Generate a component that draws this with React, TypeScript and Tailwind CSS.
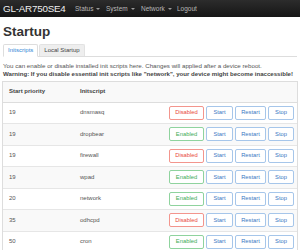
import React from "react";

const rows: [string, string, boolean][] = [
  ["19", "dnsmasq", false],
  ["19", "dropbear", true],
  ["19", "firewall", false],
  ["19", "wpad", true],
  ["20", "network", true],
  ["35", "odhcpd", false],
  ["50", "cron", true],
];

function Caret() {
  return <span className="ml-[3px] inline-block align-middle border-x-[2px] border-t-[2px] border-x-transparent border-t-[#999]" />;
}

export default function App() {
  return (
    <div className="w-[300px] h-[250px] overflow-hidden bg-white relative" style={{ fontFamily: '"Liberation Sans", Arial, sans-serif' }}>
      <div className="h-[17px] bg-gradient-to-b from-[#2c2c2c] to-[#161616] flex items-center">
        <div className="pl-[3px] text-[9.8px] leading-none text-[#eeeeee] w-[75px] flex-none whitespace-nowrap tracking-[-0.2px]">GL-AR750SE4</div>
        <div className="flex items-center text-[6.5px] text-[#b8b8b8] whitespace-nowrap">
          <span className="w-[31px]">Status<Caret /></span>
          <span className="w-[35px]">System<Caret /></span>
          <span className="w-[36px]">Network<Caret /></span>
          <span>Logout</span>
        </div>
      </div>
      <div className="px-[3px]">
        <div className="mt-[8px] text-[13.5px] font-bold leading-none text-[#333]">Startup</div>
        <div className="mt-[5px] flex border-b border-[#ddd] h-[13px] items-end">
          <div className="h-[13px] px-[4px] flex items-center text-[6px] text-[#2f86d6] bg-white border border-[#ddd] border-b-white rounded-t-[2px] -mb-px">Initscripts</div>
          <div className="h-[12px] ml-[1px] px-[4px] flex items-center text-[6px] text-[#444] bg-[#eeeeee] border border-[#e2e2e2] border-b-0 rounded-t-[2px]">Local Startup</div>
        </div>
        <div className="mt-[5px] text-[6.2px] leading-[8px] text-[#555] whitespace-nowrap">You can enable or disable installed init scripts here. Changes will applied after a device reboot.</div>
        <div className="text-[6.1px] leading-[8px] font-bold text-[#444] whitespace-nowrap">Warning: If you disable essential init scripts like "network", your device might become inaccessible!</div>
      </div>
      <div className="mx-[2px] mt-[3px] border border-[#ddd] text-[6px] text-[#555]">
        <div className="h-[21px] flex items-center bg-[#f9f9f9] border-b border-[#ddd] font-bold text-[#444]">
          <div className="w-[77px] pl-[6px]">Start priority</div>
          <div>Initscript</div>
        </div>
        {rows.map(([p, n, en], i) => (
          <div key={n} className={`h-[21.5px] flex items-center border-b border-[#e6e6e6] ${i % 2 === 1 ? "bg-[#f9f9f9]" : "bg-white"}`}>
            <div className="w-[77px] pl-[6px]">{p}</div>
            <div className="flex-1">{n}</div>
            <div className="flex items-center gap-[2px] pr-[3px] text-[5.8px]">
              {en ? (
                <div className="w-[35px] h-[14px] flex items-center justify-center rounded-[2px] border border-[#8fd39e] text-[#3dab55] bg-white">Enabled</div>
              ) : (
                <div className="w-[35px] h-[14px] flex items-center justify-center rounded-[2px] border border-[#f3958d] text-[#e8473c] bg-white">Disabled</div>
              )}
              <div className="w-[27px] h-[14px] flex items-center justify-center rounded-[2px] border border-[#a6c6ea] text-[#3a78c3] bg-white">Start</div>
              <div className="w-[31px] h-[14px] flex items-center justify-center rounded-[2px] border border-[#a6c6ea] text-[#3a78c3] bg-white">Restart</div>
              <div className="w-[26px] h-[14px] flex items-center justify-center rounded-[2px] border border-[#a6c6ea] text-[#3a78c3] bg-white">Stop</div>
            </div>
          </div>
        ))}
      </div>
    </div>
  );
}
